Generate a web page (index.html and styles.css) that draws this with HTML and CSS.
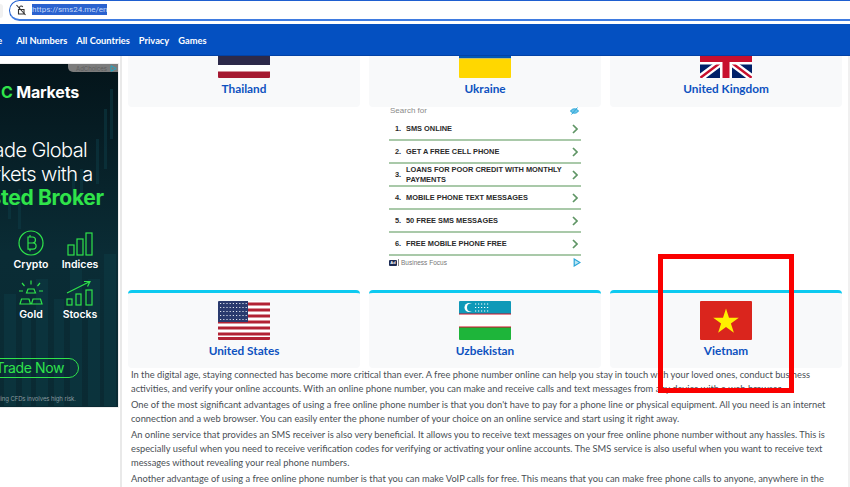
FILE: index.html
```html
<!DOCTYPE html>
<html lang="en">
<head>
<meta charset="utf-8">
<title>sms24.me</title>
<link rel="stylesheet" href="styles.css">
</head>
<body>
<div class="browser-bar">
  <div class="back"></div>
  <div class="omnibox">
    <svg class="lock" width="12" height="12" viewBox="0 0 12 12"><path d="M3.5 5.5h5.5v4.5h-5.5z M4.5 5.5v-2a1.7 1.7 0 0 1 3.2-.6" fill="none" stroke="#333" stroke-width="1.1"/><path d="M1.5 1l9 10" stroke="#333" stroke-width="1.1"/></svg>
    <span class="url">https://sms24.me/en</span>
  </div>
</div>
<nav class="nav">
  <a class="nav-clip">Home</a><a>All Numbers</a><a>All Countries</a><a>Privacy</a><a>Games</a>
</nav>
<div class="page">
  <aside class="side-ad">
    <div class="fx-ad">
      <svg class="candles" width="118" height="342" viewBox="0 0 118 342">
        <g fill="#0d3b45">
          <rect x="4" y="230" width="12" height="112"/><rect x="22" y="250" width="9" height="92"/><rect x="36" y="215" width="12" height="127"/><rect x="54" y="235" width="10" height="107"/><rect x="70" y="205" width="12" height="137"/><rect x="88" y="215" width="12" height="127"/><rect x="104" y="190" width="12" height="152"/>
          <rect x="110" y="25" width="3" height="50"/><rect x="104" y="45" width="3" height="60"/><rect x="96" y="75" width="3" height="45"/><rect x="80" y="105" width="3" height="30"/><rect x="72" y="110" width="3" height="30"/><rect x="8" y="130" width="3" height="25"/><rect x="18" y="125" width="3" height="40"/>
        </g>
      </svg>
      <div class="fx-adchoices"><span>AdChoices</span><svg width="7" height="7" viewBox="0 0 7 7"><path d="M1 .7v5.6L6.2 3.5z" fill="none" stroke="#22a7c4" stroke-width="1"/></svg></div>
      <div class="fx-logo"><b>C</b> Markets</div>
      <div class="fx-head">
        <div class="fx-l1">Trade Global</div>
        <div class="fx-l2">Markets with a</div>
        <div class="fx-l3">Trusted Broker</div>
      </div>
      <div class="fx-grid">
        <div class="fx-item">
          <svg width="26" height="26" viewBox="0 0 26 26" fill="none" stroke="#2fe34a" stroke-width="1.2"><circle cx="13" cy="13" r="12"/><path d="M10 7h4.5a3 3 0 0 1 0 6H10zM10 13h5a3.100 3.100 0 0 1 0 6.200H10zM10 7v12.200M12 5v2M12 19.200v2"/></svg>
          <span>Crypto</span>
        </div>
        <div class="fx-item">
          <svg width="26" height="24" viewBox="0 0 26 24" fill="none" stroke="#2fe34a" stroke-width="1.2"><rect x="1" y="13" width="6" height="10"/><rect x="10" y="7" width="6" height="16"/><rect x="19" y="1" width="6" height="22"/></svg>
          <span>Indices</span>
        </div>
        <div class="fx-item">
          <svg width="26" height="26" viewBox="0 0 26 26" fill="none" stroke="#2fe34a" stroke-width="1.2"><path d="M8.500 13l1.500-4h6l1.500 4zM2 24l1.500-5h7.500l1.500 5zM13.500 24l1.500-5h7.500l1.500 5zM13 .5v4M4 3l2.500 3M22 3l-2.500 3M1 11h4M21 11h4"/></svg>
          <span>Gold</span>
        </div>
        <div class="fx-item">
          <svg width="28" height="26" viewBox="0 0 28 26" fill="none" stroke="#2fe34a" stroke-width="1.2"><rect x="1" y="19" width="5" height="6"/><rect x="10" y="14" width="5" height="11"/><rect x="20" y="10" width="6" height="15"/><path d="M1 13l22-11M18 1.500h6l-2.500 5"/></svg>
          <span>Stocks</span>
        </div>
      </div>
      <div class="fx-btn"><span>Trade Now</span></div>
      <div class="fx-small">Trading CFDs involves high risk.</div>
    </div>
  </aside>
  <main class="main">
    <div class="main-inner">
      <section class="grid">
        <a class="card card-top">
          <svg class="flag" viewBox="0 0 52 39"><rect width="52" height="39" fill="#fff"/><rect width="52" height="6.500" fill="#a51931"/><rect y="32.500" width="52" height="6.500" fill="#a51931"/><rect y="13" width="52" height="13" fill="#2d2a4a"/></svg>
          <span class="name">Thailand</span>
        </a>
        <a class="card card-top">
          <svg class="flag" viewBox="0 0 52 39"><rect width="52" height="19.500" fill="#0057b7"/><rect y="19.500" width="52" height="19.500" fill="#ffd700"/></svg>
          <span class="name">Ukraine</span>
        </a>
        <a class="card card-top">
          <svg class="flag" viewBox="0 0 52 39"><rect width="52" height="39" fill="#012169"/><path d="M0 0l52 39M52 0L0 39" stroke="#fff" stroke-width="7"/><path d="M0 0l52 39M52 0L0 39" stroke="#c8102e" stroke-width="2.500"/><path d="M26 0v39M0 19.500h52" stroke="#fff" stroke-width="12"/><path d="M26 0v39M0 19.500h52" stroke="#c8102e" stroke-width="7"/></svg>
          <span class="name">United Kingdom</span>
        </a>
        <div class="ad-cell">
          <div class="search-ad">
            <div class="sa-top"><span>Search for</span>
              <svg width="9" height="8" viewBox="0 0 9 8" fill="none" stroke="#2ba5d8"><path d="M.5 4c2-3 6-3 8 0-2 3-6 3-8 0z" fill="#6cc5e8"/><path d="M1.500 7.500l6-7"/></svg>
            </div>
            <ol class="sa-list">
              <li class="sa-row"><i>1.</i><span>SMS ONLINE</span><svg class="chev" width="6" height="10" viewBox="0 0 6 10"><path d="M1 1l4 4-4 4" fill="none" stroke="#5f9565" stroke-width="1.700"/></svg></li>
              <li class="sa-row"><i>2.</i><span>GET A FREE CELL PHONE</span><svg class="chev" width="6" height="10" viewBox="0 0 6 10"><path d="M1 1l4 4-4 4" fill="none" stroke="#5f9565" stroke-width="1.700"/></svg></li>
              <li class="sa-row"><i>3.</i><span>LOANS FOR POOR CREDIT WITH MONTHLY PAYMENTS</span><svg class="chev" width="6" height="10" viewBox="0 0 6 10"><path d="M1 1l4 4-4 4" fill="none" stroke="#5f9565" stroke-width="1.700"/></svg></li>
              <li class="sa-row"><i>4.</i><span>MOBILE PHONE TEXT MESSAGES</span><svg class="chev" width="6" height="10" viewBox="0 0 6 10"><path d="M1 1l4 4-4 4" fill="none" stroke="#5f9565" stroke-width="1.700"/></svg></li>
              <li class="sa-row"><i>5.</i><span>50 FREE SMS MESSAGES</span><svg class="chev" width="6" height="10" viewBox="0 0 6 10"><path d="M1 1l4 4-4 4" fill="none" stroke="#5f9565" stroke-width="1.700"/></svg></li>
              <li class="sa-row"><i>6.</i><span>FREE MOBILE PHONE FREE</span><svg class="chev" width="6" height="10" viewBox="0 0 6 10"><path d="M1 1l4 4-4 4" fill="none" stroke="#5f9565" stroke-width="1.700"/></svg></li>
            </ol>
            <div class="sa-foot"><b>Ad</b><span>Business Focus</span>
              <svg width="8" height="9" viewBox="0 0 8 9"><path d="M1.200 1v7L7 4.500z" fill="#bde6f3" stroke="#2ba5d8" stroke-width="1.200"/></svg>
            </div>
          </div>
        </div>
        <a class="card card-accent">
          <svg class="flag" viewBox="0 0 52 39"><rect width="52" height="39" fill="#fff"/><path d="M0 3h52M0 9h52M0 15h52M0 21h52M0 27h52M0 33h52M0 37.500h52" stroke="#b22234" stroke-width="3"/><rect width="30" height="21" fill="#2a3a6e"/><rect width="30" height="21" fill="none"/><path d="M2 2.500h27M2 6.500h27M2 10.500h27M2 14.500h27M2 18.500h27" stroke="#dfe4ef" stroke-width="1.200" stroke-dasharray="1.200 2"/></svg>
          <span class="name">United States</span>
        </a>
        <a class="card card-accent">
          <svg class="flag" viewBox="0 0 52 39"><rect width="52" height="39" fill="#fff" stroke="#eee"/><rect width="52" height="13" fill="#0f99b8"/><rect y="26" width="52" height="13" fill="#1eb53a"/><path d="M0 13h52M0 26h52" stroke="#ce1126" stroke-width="1"/><circle cx="10" cy="6.500" r="4.500" fill="#fff"/><circle cx="12" cy="6.500" r="4" fill="#0f99b8"/><path d="M16 3h14M16 6.500h14M16 10h14" stroke="#fff" stroke-width="1.200" stroke-dasharray="1.200 1.800"/></svg>
          <span class="name">Uzbekistan</span>
        </a>
        <a class="card card-accent">
          <svg class="flag" viewBox="0 0 52 39"><rect width="52" height="39" fill="#da251d"/><path d="M26 7.500l3 9.300h9.800l-7.900 5.700 3 9.300-7.900-5.700-7.900 5.700 3-9.300-7.900-5.700H23z" fill="#ffef00"/></svg>
          <span class="name">Vietnam</span>
        </a>
      </section>
      <article class="copy">
        <p>In the digital age, staying connected has become more critical than ever. A free phone number online can help you stay in touch with your loved ones, conduct business activities, and verify your online accounts. With an online phone number, you can make and receive calls and text messages from any device with a web browser.</p>
        <p>One of the most significant advantages of using a free online phone number is that you don't have to pay for a phone line or physical equipment. All you need is an internet connection and a web browser. You can easily enter the phone number of your choice on an online service and start using it right away.</p>
        <p>An online service that provides an SMS receiver is also very beneficial. It allows you to receive text messages on your free online phone number without any hassles. This is especially useful when you need to receive verification codes for verifying or activating your online accounts. The SMS service is also useful when you want to receive text messages without revealing your real phone numbers.</p>
        <p>Another advantage of using a free online phone number is that you can make VoIP calls for free. This means that you can make free phone calls to anyone, anywhere in the world.</p>
      </article>
    </div>
  </main>
</div>
<div class="highlight"></div>
</body>
</html>
```
FILE: styles.css
```css
* { box-sizing: border-box; }
html, body { margin: 0; height: 487px; overflow: hidden; background: #fff; }
body { position: relative; font-family: Lato, "Open Sans", sans-serif; color: #444; }

.browser-bar { height: 24px; display: flex; align-items: flex-start; padding: 0 0 3px 0; background: #fff; }
.back { flex: none; width: 3px; height: 14px; margin: 4px 6px 0 0; background: #f1f1f1; border-radius: 0 7px 7px 0; }
.omnibox { flex: 1; height: 21px; display: flex; align-items: center; gap: 5px; padding: 0 0 1px 5px; border: 1px solid #1f5fd0; border-right: 0; border-bottom: 2px solid #3f7be0; border-radius: 11px 0 0 11px; }
.lock { flex: none; }
.url { display: block; height: 11px; width: 75px; font: 8px/11px Roboto, sans-serif; color: #c4d8f7; background: #2a62cf; white-space: nowrap; overflow: hidden; }

.nav { height: 32px; display: flex; align-items: center; gap: 9px; padding: 1px 0 0 0; background: #0450c1; border-bottom: 1px solid #0342a6; overflow: hidden; }
.nav a { font-size: 9.300px; font-weight: 700; color: #fff; white-space: nowrap; }
.nav .nav-clip { margin-left: -23px; margin-right: 5px; }

.page { display: flex; height: 431px; border-right: 2px solid #f0f0f0; }
.side-ad { flex: none; width: 122px; padding-top: 8px; background: #fff; border-right: 2px solid #e9e9e9; height: 100%; }
.fx-ad { position: relative; width: 118px; height: 343px; overflow: hidden; background: linear-gradient(#04141a, #0a2c35 55%, #0a2a33); color: #fff; font-family: Inter, "Liberation Sans", sans-serif; box-shadow: 0 0 0 1px #eee; }
.candles { position: absolute; left: 0; top: 0; opacity: .55; }
.fx-adchoices { position: absolute; right: 0; top: 0; width: 50px; height: 8px; background: #7c7c7c; border-radius: 0 0 0 5px; display: flex; align-items: center; justify-content: space-between; padding: 0 1px 0 8px; font-size: 6px; color: #5f5f5f; }
.fx-logo { position: relative; padding: 19px 0 0 1px; font-size: 16px; line-height: 18px; font-weight: 700; letter-spacing: -.2px; }
.fx-logo b { color: #2fe34a; font-weight: 700; }
.fx-head { position: relative; margin-top: 38px; font-size: 20px; line-height: 23.500px; font-weight: 300; white-space: nowrap; letter-spacing: -.6px; }
.fx-l1 { margin-left: -24px; }
.fx-l2 { margin-left: -34px; }
.fx-l3 { margin-left: -44px; font-size: 21px; font-weight: 700; color: #2fe34a; letter-spacing: -.3px; }
.fx-grid { position: relative; display: grid; grid-template-columns: 62px 36px; grid-auto-rows: 50px; margin-top: 11px; }
.fx-item { display: flex; flex-direction: column; align-items: center; justify-content: flex-end; gap: 2px; font-size: 10.500px; line-height: 13px; font-weight: 600; }
.fx-btn { position: relative; width: 92px; height: 20px; margin: 37px 0 0 -13px; border: 1px solid #2fe34a; border-radius: 10px; color: #2fe34a; font-size: 14px; line-height: 18px; text-align: right; padding-right: 14px; letter-spacing: -.4px; white-space: nowrap; }
.fx-small { position: relative; margin: 17px 0 0 -12px; font-size: 6px; line-height: 8px; color: #8a9a9f; white-space: nowrap; letter-spacing: -.1px; }

.main { flex: 1; min-width: 0; overflow: hidden; }
.main-inner { margin-top: -20px; padding: 0 4px 0 6px; }
.grid { display: grid; grid-template-columns: repeat(3, 232px); column-gap: 9px; }
.card { display: flex; flex-direction: column; align-items: center; background: #f8f9fa; border-radius: 4px; }
.card-top { height: 71px; padding-top: 3px; }
.card-accent { grid-row: 3; height: 78px; padding-top: 8px; border-top: 3px solid #0dcaf0; }
.flag { display: block; width: 52px; height: 39px; border-radius: 1px; }
.name { margin-top: 2px; font-size: 11.800px; line-height: 17px; font-weight: 700; color: #0e52c0; }
.ad-cell { grid-row: 2; grid-column: 2; padding: 0 0 0 20px; height: 183px; background: #fff; }
.search-ad { width: 192px; font-family: "Liberation Sans", Arial, sans-serif; }
.sa-top { height: 11px; padding: 0 2px 0 1px; display: flex; justify-content: space-between; align-items: flex-start; font-size: 8px; line-height: 8px; color: #8a8a8a; }
.sa-list { list-style: none; margin: 0; padding: 0; }
.sa-row { height: 23px; display: flex; align-items: center; border-bottom: 2px solid #a9c9a9; font-size: 7.400px; line-height: 10px; font-weight: 700; color: #2a2a2a; padding: 0 3px 0 6px; }
.sa-row i { flex: none; width: 11px; font-style: normal; }
.sa-row span { flex: 1; padding-right: 10px; }
.chev { flex: none; }
.sa-foot { height: 13px; display: flex; align-items: center; font-size: 6.500px; color: #777; }
.sa-foot b { width: 8px; height: 6px; margin-right: 1px; background: #1d2c52; color: #fff; font-size: 4px; line-height: 6px; text-align: center; border-radius: 1px; }
.sa-foot span { flex: 1; padding-left: 2px; border-left: 1px solid #888; line-height: 7px; }

.copy { padding: 0 0 0 3px; width: 706px; font-size: 9.320px; line-height: 14px; color: #4a4f55; }
.copy p { margin: 0 0 2px; }

.highlight { position: absolute; left: 658px; top: 254px; width: 136px; height: 139px; border: 5px solid #fa0000; }
```
